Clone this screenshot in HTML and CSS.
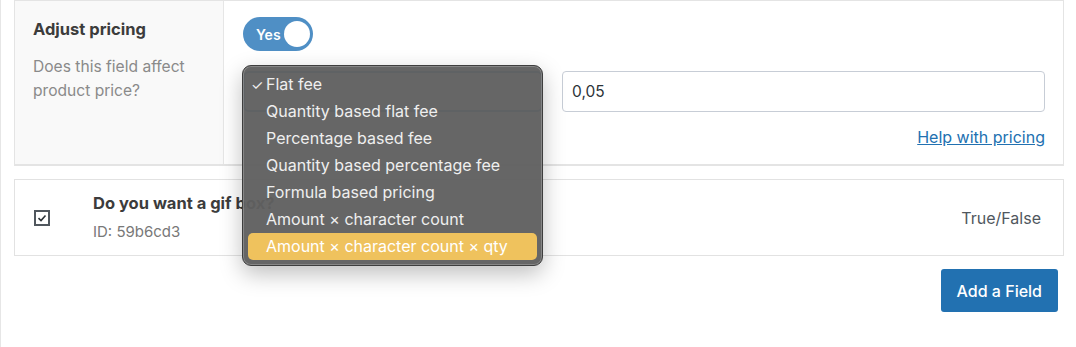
FILE: index.html
```html
<!DOCTYPE html>
<html>
<head>
    <title>Field pricing</title>
    <link rel="stylesheet" href="styles.css">
</head>
<body>
    <div class="wrap">
        <div class="pricing-panel">
            <div class="label-col">
                <h4>Adjust pricing</h4>
                <p>Does this field affect product price?</p>
            </div>
            <div class="field-col">
                <div class="toggle">
                    <span>Yes</span>
                    <span class="knob"></span>
                </div>
                <div class="price-row">
                    <div class="select-box"></div>
                    <input type="text" class="amount" value="0,05">
                </div>
                <div class="help-row">
                    <a href="#">Help with pricing</a>
                </div>

                <!-- open native select menu -->
                <ul class="select-menu">
                    <li class="checked">Flat fee</li>
                    <li>Quantity based flat fee</li>
                    <li>Percentage based fee</li>
                    <li>Quantity based percentage fee</li>
                    <li>Formula based pricing</li>
                    <li>Amount × character count</li>
                    <li class="hover">Amount × character count × qty</li>
                </ul>
            </div>
        </div>

        <div class="field-row">
            <div class="field-icon">
                <svg width="16" height="16" viewBox="0 0 16 16">
                    <rect x="1" y="1" width="14" height="14" fill="none" stroke="#50575e" stroke-width="2"/>
                    <path d="M4.5 8.2 L7 10.5 L11.5 5.5" fill="none" stroke="#2c3338" stroke-width="1.6"/>
                </svg>
            </div>
            <div class="field-info">
                <div class="field-name">Do you want a gif box?</div>
                <div class="field-id">ID: 59b6cd3</div>
            </div>
            <div class="field-type">True/False</div>
        </div>

        <div class="actions">
            <button type="button">Add a Field</button>
        </div>
    </div>
</body>
</html>
```

FILE: styles.css
```css
body {
    margin: 0;
    font-family: Inter, "Noto Sans", Arial, sans-serif;
    background-color: white;
    color: #3c434a;
}
.wrap {
    border-left: 1px solid #e6e6e6;
    height: 347px;
    box-sizing: border-box;
    padding: 0 12px 0 13px;
}
.pricing-panel {
    display: grid;
    grid-template-columns: 209px 1fr;
    height: 166px;
    box-sizing: border-box;
    border: 1px solid #e4e4e4;
    border-bottom-width: 2px;
}
.label-col {
    background-color: #f9f9f9;
    border-right: 1px solid #e6e6e6;
    padding: 18px 18px 0 18px;
}
.label-col h4 {
    margin: 0;
    font-size: 16.5px;
    font-weight: 700;
    color: #3c3c3c;
    line-height: 20px;
}
.label-col p {
    margin: 16px 0 0;
    font-size: 15.6px;
    line-height: 24px;
    color: #8a8a8a;
}
.field-col {
    position: relative;
    padding: 16px 18px 0 19px;
}
.toggle {
    display: flex;
    align-items: center;
    justify-content: space-between;
    width: 70px;
    height: 34px;
    box-sizing: border-box;
    padding: 0 3px 0 13px;
    border-radius: 17px;
    background-color: #4f8fc5;
    color: white;
    font-size: 14px;
    font-weight: 600;
}
.knob {
    width: 26px;
    height: 26px;
    border-radius: 50%;
    background-color: white;
}
.price-row {
    display: flex;
    gap: 19px;
    margin-top: 20px;
}
.select-box {
    width: 300px;
    height: 41px;
    box-sizing: border-box;
    border: 2px solid #4f8fc5;
    border-radius: 6px;
}
.amount {
    flex: 1;
    height: 41px;
    box-sizing: border-box;
    border: 1px solid #c7cdd6;
    border-radius: 4px;
    padding: 0 9px;
    font-family: inherit;
    font-size: 15.5px;
    color: #2c3338;
}
.help-row {
    text-align: right;
    margin-top: 15px;
}
.help-row a {
    color: #2271b1;
    font-size: 16px;
    text-decoration: underline;
}
.select-menu {
    position: absolute;
    left: 18px;
    top: 64px;
    width: 301px;
    margin: 0;
    padding: 5px 5px 5px;
    box-sizing: border-box;
    list-style: none;
    background-color: rgba(96, 96, 96, 0.96);
    border: 1px solid #3e3e3e;
    border-radius: 9px;
    box-shadow: inset 0 0 0 1px rgba(255, 255, 255, 0.22), 0 8px 22px rgba(0, 0, 0, 0.25);
}
.select-menu li {
    position: relative;
    height: 27px;
    line-height: 27px;
    padding-left: 18px;
    font-size: 16px;
    color: #efefef;
    border-radius: 5px;
}
.select-menu li.checked::before {
    content: "✓";
    position: absolute;
    left: 3px;
    font-size: 14px;
}
.select-menu li.hover {
    background-color: #efc25d;
    color: white;
}
.field-row {
    display: flex;
    align-items: center;
    height: 77px;
    margin-top: 13px;
    box-sizing: border-box;
    border: 1px solid #e2e2e2;
}
.field-icon {
    width: 78px;
    padding-left: 19px;
    box-sizing: border-box;
    display: flex;
}
.field-info {
    flex: 1;
}
.field-name {
    font-size: 16.5px;
    font-weight: 700;
    color: #3c3c3c;
    margin-top: -1px;
}
.field-id {
    margin-top: 9px;
    font-size: 15px;
    color: #787878;
}
.field-type {
    padding-right: 22px;
    font-size: 16px;
    color: #50575e;
}
.actions {
    display: flex;
    justify-content: flex-end;
    margin-top: 13px;
    padding-right: 6px;
}
button {
    background-color: #2271b1;
    color: white;
    height: 43px;
    padding: 0 16px;
    border: none;
    border-radius: 3px;
    font-family: inherit;
    font-size: 16px;
    font-weight: 500;
    cursor: pointer;
}
```
